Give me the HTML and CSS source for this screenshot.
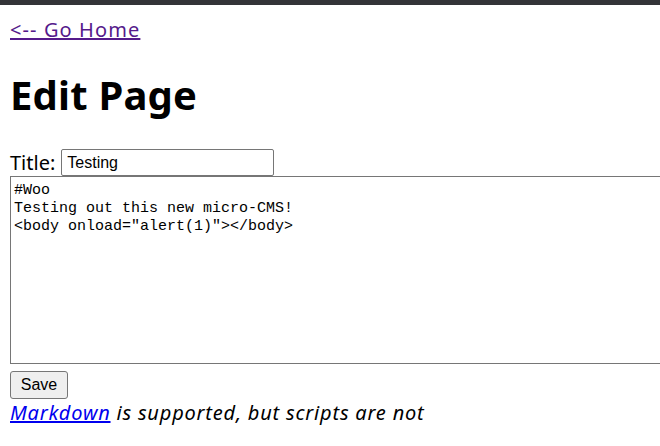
FILE: index.html
```html
<!DOCTYPE html>
<html>
<head>
<meta charset="utf-8">
<title>Edit Page</title>
<link rel="stylesheet" href="styles.css">
</head>
<body>
<div class="topbar"></div>
<main class="page">
  <a class="home" href="#">&lt;-- Go Home</a>
  <h1 class="heading">Edit Page</h1>
  <form class="form">
    <label class="title-row">Title: <input class="title-input" type="text" value="Testing"></label>
    <textarea class="body-input">#Woo
Testing out this new micro-CMS!
&lt;body onload="alert(1)"&gt;&lt;/body&gt;</textarea>
    <div class="actions"><button class="save" type="button">Save</button></div>
  </form>
  <p class="note"><a class="md-link" href="#">Markdown</a> is supported, but scripts are not</p>
</main>
</body>
</html>
```

FILE: styles.css
```css
html, body {
  margin: 0;
  padding: 0;
  background: #fff;
  overflow: hidden;
}
body {
  font-family: "Noto Sans", "Open Sans", sans-serif;
  font-size: 20px;
  color: #000;
}
.topbar {
  height: 5px;
  background: #333438;
}
.page {
  padding: 11px 10px 0 10px;
}
.home {
  color: #551a8b;
  display: inline-block;
  line-height: 27px;
  letter-spacing: 1.1px;
}
.heading {
  font-size: 40px;
  font-weight: 700;
  margin: 25px 0 27px 0;
  line-height: 54px;
  letter-spacing: 0.2px;
}
.form {
  display: flex;
  flex-direction: column;
  align-items: flex-start;
}
.title-row {
  display: flex;
  align-items: center;
  gap: 6px;
  line-height: 27px;
}
.title-input {
  width: 213px;
  height: 27px;
  box-sizing: border-box;
  font-family: "Liberation Sans", Arial, sans-serif;
  font-size: 16px;
  padding: 1px 5px;
  border: 1px solid #767676;
  border-radius: 2px;
  margin: 0;
}
.body-input {
  width: 700px;
  height: 188px;
  box-sizing: border-box;
  font-family: "Liberation Mono", monospace;
  font-size: 15px;
  line-height: 18px;
  padding: 5px 3px 3px 3px;
  border: 1px solid #767676;
  margin: 0;
  resize: none;
  color: #000;
}
.actions {
  display: flex;
  margin-top: 7px;
}
.save {
  width: 58px;
  height: 28px;
  font-family: "Liberation Sans", Arial, sans-serif;
  font-size: 16px;
  background: #efefef;
  border: 1px solid #767676;
  border-radius: 3px;
  padding: 0;
  color: #000;
}
.note {
  margin: 0;
  font-style: italic;
  line-height: 27px;
  letter-spacing: 0.8px;
}
.md-link {
  color: #0000ee;
}
```
